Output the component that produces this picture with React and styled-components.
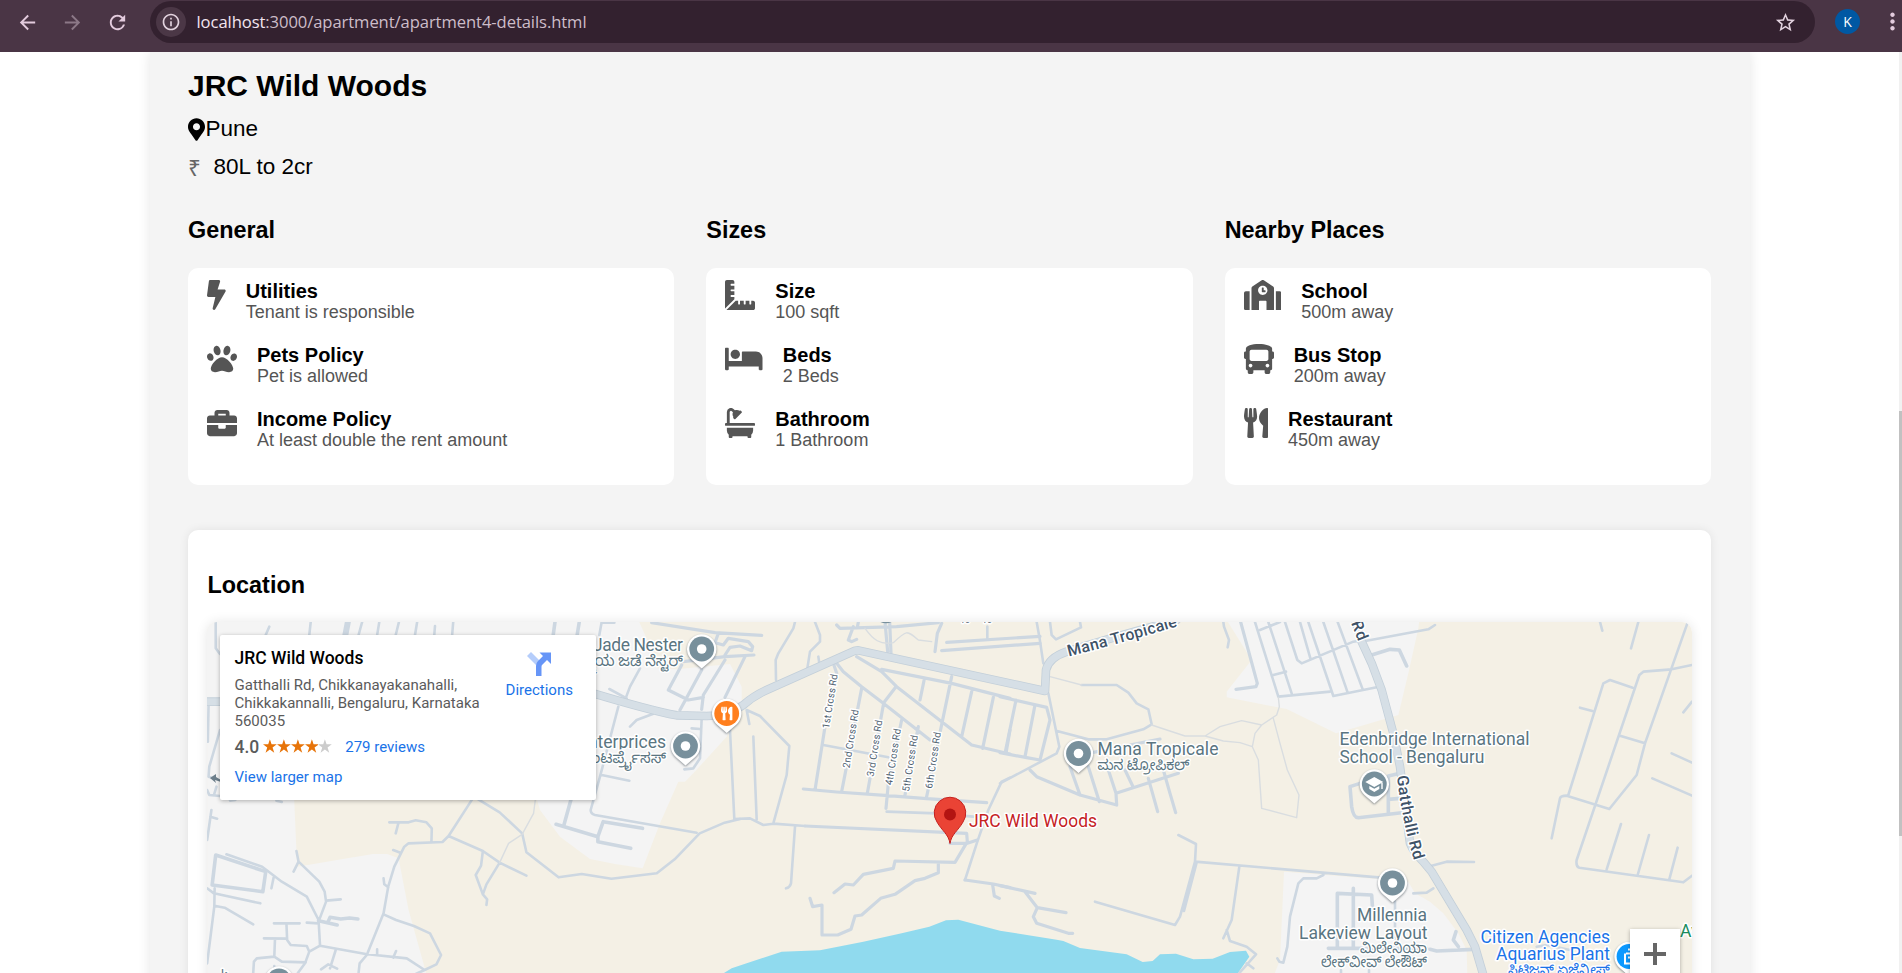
import React from "react";
import styled, { createGlobalStyle } from "styled-components";
import {
  FaBolt, FaPaw, FaBriefcase, FaRulerCombined, FaBed, FaBath,
  FaSchool, FaBus, FaUtensils, FaMapMarkerAlt,
} from "react-icons/fa";
import { MdArrowBack, MdArrowForward, MdRefresh, MdStarBorder, MdInfoOutline, MdMoreVert } from "react-icons/md";

const GlobalStyle = createGlobalStyle`
  * { box-sizing: border-box; }
  html, body { margin: 0; padding: 0; background: #fff; overflow: hidden; }
  body { font-family: "Liberation Sans", Arial, sans-serif; color: #000; }
  h2, h3, p { margin: 0; }
  svg { display: block; flex: none; }
`;

const Window = styled.div`
  height: 973px;
  display: flex;
  flex-direction: column;
  overflow: hidden;
`;

/* Browser bar */
const BrowserBar = styled.header`
  flex: none;
  height: 52px;
  background: #4a3545;
  display: flex;
  align-items: flex-start;
  padding-top: 1px;
  overflow: hidden;
`;
const NavButton = styled.span`
  width: 45px;
  height: 42px;
  display: flex;
  align-items: center;
  justify-content: center;
  color: ${(p) => (p.$dim ? "#8c7887" : "#e3cbdd")};
`;
const NavGroup = styled.div`
  flex: none;
  display: flex;
  width: 150px;
  padding-left: 5px;
`;
const AddressField = styled.div`
  flex: none;
  width: 1665px;
  height: 42px;
  border-radius: 21px;
  background: #33212f;
  display: flex;
  align-items: center;
  padding: 0 18px 0 6px;
  color: #e3d3df;
`;
const SiteInfo = styled.span`
  width: 30px;
  height: 30px;
  border-radius: 50%;
  background: #4b3746;
  display: flex;
  align-items: center;
  justify-content: center;
`;
const Url = styled.span`
  flex: 1;
  margin-left: 10.5px;
  font: 16.6px/24px "Open Sans", "Noto Sans", sans-serif;
  letter-spacing: -0.08px;
  color: #cdbdc9;
  b { font-weight: 400; color: #f3e6f0; }
`;
const Profile = styled.span`
  flex: none;
  width: 25px;
  height: 25px;
  margin: 8px 0 0 20px;
  border-radius: 50%;
  background: #0058a3;
  color: #fff;
  font: 14px/25px "Open Sans", sans-serif;
  text-align: center;
`;
const Menu = styled.span`
  flex: none;
  margin: 7px 0 0 18.5px;
  color: #e3cbdd;
`;

/* Page */
const Viewport = styled.div`
  flex: 1;
  display: flex;
  min-height: 0;
`;
const Scroller = styled.main`
  flex: 1;
  display: flex;
  justify-content: center;
  align-items: flex-start;
  overflow: hidden;
`;
const Scrollbar = styled.div`
  width: 3px;
  background: #f1f1f1;
  padding-top: 359px;
`;
const Thumb = styled.div`
  height: 425px;
  background: #c1c1c1;
`;
const Container = styled.article`
  width: 1600px;
  height: 1100px;
  flex: none;
  padding: 16px 38.5px 0;
  background: #f4f4f4;
  box-shadow: 0 0 12px rgba(0, 0, 0, 0.1);
`;
const Title = styled.h2`
  font-size: 30px;
  line-height: 36px;
`;
const Fact = styled.p`
  display: flex;
  align-items: center;
  height: 28px;
  margin-top: ${(p) => p.$top}px;
  font-size: 22.5px;
`;
const Marker = styled(FaMapMarkerAlt)`
  width: 17px;
  height: 23px;
  margin-right: 0.5px;
`;
const Rupee = styled.span`
  width: 25.5px;
  color: #666;
`;
const Columns = styled.section`
  display: grid;
  grid-template-columns: repeat(3, 1fr);
  gap: 32px;
  margin-top: 36px;
`;
const Heading = styled.h3`
  font-size: 23.4px;
  line-height: 27px;
`;
const Card = styled.div`
  margin-top: 24px;
  height: 217px;
  border-radius: 10px;
  background: #fff;
  padding: 11.5px 19px;
  display: flex;
  flex-direction: column;
  gap: 21px;
`;
const Item = styled.div`
  display: flex;
  gap: 20px;
  height: 43px;
  color: #555;
`;
const ItemIcon = styled.span`
  width: ${(p) => p.$width}px;
  svg { width: 100%; height: 30px; }
`;
const ItemText = styled.div`
  font-size: 18px;
  line-height: 21px;
  strong {
    display: block;
    color: #000;
    font-size: 20px;
    line-height: 22px;
  }
`;
const LocationCard = styled.section`
  margin-top: 45px;
  height: 560px;
  border-radius: 10px;
  background: #fff;
  box-shadow: 0 0 10px rgba(0, 0, 0, 0.08);
  padding: 42px 19px 0;
`;
const LocationHeading = styled(Heading)`
  padding-left: 0.5px;
`;
const MapShadow = styled.div`
  margin-top: 23px;
  border-radius: 10px;
  box-shadow: 0 0 12px rgba(0, 0, 0, 0.1);
`;
const MapFrame = styled.div`
  position: relative;
  height: 500px;
  border-radius: 10px;
  overflow: hidden;
  background: #f4f0e5;
`;
const PlaceCard = styled.div`
  position: absolute;
  left: 13px;
  top: 13px;
  width: 376px;
  height: 165px;
  border-radius: 2px;
  background: #fff;
  box-shadow: 0 1px 4px rgba(0, 0, 0, 0.3);
  display: flex;
  padding: 13px 15px 13px 14.5px;
  font: 15px/18px Roboto, sans-serif;
  color: #5b5b5b;
`;
const PlaceInfo = styled.div`
  width: 262px;
`;
const PlaceName = styled.div`
  font-size: 17.5px;
  line-height: 20px;
  font-weight: 500;
  color: #000;
  margin-bottom: 8px;
`;
const Rating = styled.div`
  display: flex;
  align-items: center;
  margin-top: 6px;
  height: 21px;
  b { font-size: 17.5px; font-weight: 500; margin-right: 4px; }
`;
const Link = styled.span`
  color: #1a73e8;
  margin-left: ${(p) => p.$left || 0}px;
`;
const LinkRow = styled.div`
  margin-top: 11px;
`;
const Directions = styled.div`
  flex: 1;
  padding-top: 4px;
  display: flex;
  flex-direction: column;
  align-items: center;
  gap: 5px;
  margin-left: 1px;
`;
const ZoomIn = styled.div`
  position: absolute;
  left: 1423px;
  top: 307px;
  width: 50px;
  height: 60px;
  background: #fff;
  box-shadow: 0 1px 4px rgba(0, 0, 0, 0.3);
  padding: 14px;
`;
const Roads = styled.g`
  fill: none;
  stroke: ${(p) => p.$tone || "#cdd7e1"};
  stroke-linecap: round;
  stroke-linejoin: round;
  stroke-width: ${(p) => p.$w || 2.6}px;
  path { vector-effect: non-scaling-stroke; }
`;
const Label = styled.text`
  font-family: Roboto, "Noto Sans Kannada", "Noto Sans", sans-serif;
  font-size: ${(p) => p.$size || 17.5}px;
  font-weight: ${(p) => p.$weight || 400};
  fill: ${(p) => p.$tone || "#5a7581"};
  paint-order: stroke;
  stroke: #fff;
  stroke-width: 3px;
  stroke-linejoin: round;
`;
const PinShape = styled.g`
  filter: drop-shadow(0 1px 1.2px rgba(60, 70, 80, 0.6));
`;

const WEST = "translate(180 520) scale(.357143 .333333)";
const MID = "translate(560 610) scale(.333333)";
const EAST = "translate(1000 610) scale(.333333)";
const FAR_EAST = "translate(1300 610) scale(.333333)";

const roads = [
  { at: WEST, w: 2.6, d: "M100 306V385L112 402M240 345L250 320M362 345L366 306M500 345L510 306M552 345L558 306M604 345L613 306M658 345L664 306M712 345L714 318M762 345L765 306M80 555L78 665M112 630L82 740L80 770L95 775M76 810L82 825L112 828M95 825L102 800M88 870L76 960M85 890L104 896M140 842L155 840M270 842L285 846M130 1003L230 1040L285 1085L355 1130L388 1200L392 1275M263 1068L256 1105M76 1105L95 1120L225 1150M97 1105L96 1160L76 1330M96 1157L125 1163L205 1213M326 993L332 1025L318 1055M332 1025L390 1085L405 1115L409 1145L388 1205M409 1142L450 1138M355 1208L388 1210M263 1210H335M298 1210L300 1260L310 1275L355 1278L362 1295M235 1255L300 1256M266 1256L264 1310M205 1359L207 1325L215 1315L264 1310L285 1325L352 1327M392 1277L362 1295L350 1330L330 1359M392 1277L520 1302L635 1315L685 1350M436 1290L420 1345M395 1348L415 1333L440 1346M264 1338V1353M552 1288V1303M605 1293L597 1313M660 1362L685 1350L718 1333L731 1305L700 1240L655 1218L605 1200L570 1183M500 1359L503 1330L523 1305L570 1180L583 1100L600 1040L628 980L640 970L735 966L752 948L818 838M597 990L617 998M570 1075L572 1093L583 1102M704 966L705 925L690 907L660 901L640 907H586M612 907L604 940M752 948L848 993L895 1028L970 1067M848 993L843 1037L828 1065L848 1123L860 1138L858 1155M848 1123L858 1093L895 1028M835 838L895 877L958 940L970 997L1060 1072L1125 1062L1208 1076L1335 1060L1385 1018L1455 940L1525 908L1568 897" },
  { at: WEST, w: 3.6, d: "M100 1005L240 1055L232 1115L90 1095ZM1095 838L1075 915M1053 913L1170 950L1185 905L1295 925M1170 950V965L1262 985M388 1202L440 1215M415 1205L420 1192L450 1197L475 1194L498 1197M1050 306L1045 345M1118 306L1112 345" },
  { at: WEST, w: 6, d: "M470 306L463 345" },
  { at: WEST, w: 1.4, tone: "#d9dde0", d: "M895 1028L920 970L958 943L990 880L995 838" },
  { at: MID, w: 2.6, d: "M125 36L118 75M125 38H163M240 175L210 230L198 262M148 237L200 265M278 312L230 330L210 350M175 290L120 500L92 600Q92 611 105 615L410 668M125 495L208 512M425 325L420 445L400 475L373 478M395 355L420 357M510 360L523 628M523 627L570 625L610 645L640 641L735 648M580 380L590 628M560 300L600 318L688 408L680 495L640 640M560 300L568 342M648 210L647 150L655 130L700 55L705 36M742 175L750 125L780 95V75L765 36M778 160L775 140M705 650L693 820Q690 832 678 835M980 605L1130 610L1240 620M1350 503L1325 515L1285 600L1252 695L1215 810M1282 50V85M790 405L985 442" },
  { at: MID, w: 3.2, d: "M275 38L465 68L605 76M365 165L325 240L385 270L430 262M425 180L360 300M495 150L430 255L425 298M555 140L495 262M370 155L495 140L582 135M475 70L465 98L490 105L505 85L565 95L578 110L575 122L540 108L510 112L495 135M735 648L1220 670L1222 695L1185 757L1005 753L1000 775L910 793L880 825L855 822L822 848M1170 700H1222L1252 690M1135 757V788L1095 805L1065 812L1005 853L962 865L905 915L885 918L873 958L833 975H786V885L758 890L750 865M730 537L830 546L975 556L1100 566L1280 578M1215 810L1300 822L1350 833M1298 825L1303 858L1318 865M795 350L765 540M820 160L830 190M905 235L845 545M970 285L922 550M1025 330L985 520L978 595M1075 350L1035 555M1175 200L1100 560M830 160L850 185L905 230L970 280L1110 390M890 140L965 185L1010 230L1235 405L1350 432M965 178L1175 220L1350 265M1008 230L970 280M1092 212L1080 270M1235 245L1205 380M1300 262L1268 415M1350 360L1338 430M830 45L840 55L1010 50L1135 38M880 50L865 90L875 95L890 88M895 36L892 52M1145 40L1132 70L1125 125M1160 97L1440 79M1145 122L1440 100M975 36L983 125M989 36L993 130" },
  { at: MID, w: 1.4, tone: "#d9dde0", d: "M915 55C940 90 960 105 1000 98C1040 60 1040 60 1075 90L1115 95" },
  { at: EAST, w: 2.6, d: "M145 250L178 410L170 430L0 520M150 36L155 75L168 88L243 52L240 36M245 225H350L385 248L410 280L445 298L455 343L430 358L320 388H265L168 362M535 675L588 702L585 755L540 920L525 945L285 875M590 757L552 903M585 755L1170 805M718 770L695 930L670 985M680 960L690 993L740 1010L768 1033L718 1089M740 1060L760 1075M670 36L672 50L687 90L683 112M765 36L835 260L990 245M805 36L875 250M780 60L840 36M820 195L858 185M855 36L892 150L905 160L1060 95L1090 90M900 36L932 148M925 36L1000 258L1130 232M970 36L1042 245M1013 36L1087 235M970 795L950 805H910L895 820L870 920L862 1010L850 1058L838 1055L832 1045M110 36L118 80L130 160" },
  { at: EAST, w: 3.2, d: "M0 260L140 292L150 330L120 450L80 443L0 428M48 270L15 430M105 285L75 440M90 480L110 500L240 555L350 585L348 550L535 490M210 470L240 555M265 470L298 575M325 480L348 550M375 480L398 528M445 505L473 605M490 480L510 550L527 608M280 427L480 387M0 827L105 850M75 845L112 893L198 908M112 893L100 920L110 940L205 970H218M722 36L772 220L768 230L708 238" },
  { at: EAST, w: 1.4, tone: "#d9dde0", d: "M150 200L245 225M455 345L555 378H615L660 350L725 332L785 345L830 315L838 290L835 262M615 378L670 393L720 398L757 410L765 370L785 345M757 410L775 450L785 595L890 623L897 555L862 480L840 400L820 325" },
  { at: FAR_EAST, w: 2.6, d: "M200 92L385 58L405 45M395 767L440 755L522 756M900 36L907 62M1015 36L993 115M1162 40L1035 400L1010 495L928 597L800 557Q782 557 780 565L755 685M805 555L910 220L930 210L998 233M1176 165L1115 178L1030 185L1018 195L830 750Q827 770 838 773L1150 817L1176 797M840 293L877 303M960 377L1035 400M1150 307L1176 275M1115 430L1176 458M1057 505L1176 557M963 642L920 778M1047 675L1013 795M1133 713L1108 808M400 835L380 848L340 850M285 875V1020M710 1010L740 1005L810 1020M123 1080V1089M207 1080V1089" },
  { at: FAR_EAST, w: 3.6, d: "M215 135L270 118L298 120L320 168M300 490L265 498V610M180 520L150 530L155 590Q160 623 175 623L305 608M265 568L300 565M112 1015V850L215 855L218 900M160 835V1015M85 1015H380M390 1018L410 1023L520 1018M468 965L460 990L475 1010" },
];

const highways = [
  { at: WEST, d: "M60 545H120" },
  { at: MID, d: "M90 247C200 280 280 303 350 316L440 318L500 315L550 285Q580 258 620 240L885 122L895 121L1455 243L1458 180C1465 150 1490 135 1520 125C1600 100 1700 70 1850 30" },
  { at: FAR_EAST, d: "M165 30L185 95L215 160L245 240L280 370L300 470L330 700Q340 725 370 755L395 785L500 960L525 1010L550 1095" },
];

function Pin({ x, y, tone = "#78909c", children }) {
  return (
    <g transform={`translate(${x} ${y})`}>
      <PinShape>
        <path d="M0 19.500L-9.500 11.200A14.700 14.700 0 1 1 9.500 11.200Z" fill="#fff" />
      </PinShape>
      <circle r="12.400" fill={tone} />
      {children || <circle r="4.800" fill="#fff" />}
    </g>
  );
}

function Area({ at, d, fill = "#f4f4f4" }) {
  return <path transform={at} d={d} fill={fill} />;
}

function Kannada({ x, y, width, tone, children }) {
  return (
    <Label $size={15} $tone={tone} x={x} y={y} textLength={width} lengthAdjust="spacingAndGlyphs">{children}</Label>
  );
}

const crossRoads = [
  ["1st Cross Rd", 829, 729, 55], ["2nd Cross Rd", 849.5, 768.5, 59], ["3rd Cross Rd", 873.5, 777, 57],
  ["4th Cross Rd", 892, 785.5, 57], ["5th Cross Rd", 909, 792, 57], ["6th Cross Rd", 932, 789, 57],
];

function MapDrawing() {
  return (
    <svg width="1485" height="351" viewBox="207 622 1485 351">
      <defs>
        <path id="mana-road" d="M1069 656.5Q1125 642 1192 622" />
        <path id="gatthalli" d="M1397 776Q1402 822 1415 863" />
      </defs>
      <Area at={MID} d="M-1060 30H235L262 90L290 175L350 178L510 162L545 230V275L500 380L400 490L375 515H355L300 640L248 775L165 762L90 747L0 680L-60 600L-90 500L-1060 400Z" />
      <Area at={WEST} d="M76 500H320V845L328 1040L440 1020L540 1002L580 1002L612 1015L640 1170L690 1362H76Z" />
      <Area at={FAR_EAST} d="M-220 30L-145 150L-220 245V262L-40 297L108 370L295 315L325 190L355 55L358 30Z" />
      <Area at={FAR_EAST} d="M-48 785L240 808L325 815L345 850L390 875L430 910L475 970L500 1020L502 1095H-78L-60 1050Z" />
      <Area at={MID} fill="#90daee" d="M492 1089L515 1075L560 1060L665 1025L780 1021L910 995L1025 970L1108 950L1158 931L1195 929L1320 962L1490 989L1510 993L1560 1014L1700 1033L1748 1056L1778 1053L1800 1033L1848 1031L1900 1048L1958 1046L2010 1026L2058 1022L2068 1040L2030 1095Z" />
      {roads.map((r, i) => (
        <Roads key={i} $w={r.w} $tone={r.tone}><path transform={r.at} d={r.d} /></Roads>
      ))}
      <Roads $w={8.6} $tone="#c3cfd9">{highways.map((r, i) => <path key={i} transform={r.at} d={r.d} />)}</Roads>
      <Roads $w={7} $tone="#d6dfe6">{highways.map((r, i) => <path key={i} transform={r.at} d={r.d} />)}</Roads>
      <path d="M210 778L216 774V777L221 780V782L215 780L216 783Z" fill="#6d7f8b" />

      {crossRoads.map(([name, x, y, w]) => (
        <Label key={name} $size={10} $tone="#4f6170" textLength={w} transform={`translate(${x} ${y}) rotate(-81)`}>{name}</Label>
      ))}
      <Label $size={16} $weight={500} $tone="#3f5368"><textPath href="#mana-road" textLength="113">Mana Tropicale</textPath></Label>
      <Label $size={16} $weight={500} $tone="#3f5368"><textPath href="#gatthalli" textLength="86">Gatthalli Rd</textPath></Label>
      <Label $size={16} $weight={500} $tone="#3f5368" transform="translate(1351 623) rotate(68)" textLength="20">Rd</Label>
      <Label $size={9} $tone="#4f6170" x="960" y="623">10</Label>
      <Label $size={9} $tone="#4f6170" x="982" y="623">10</Label>

      <Label x="593" y="651" textLength="90">Jade Nester</Label>
      <Label $size={15} x="683" y="666" textAnchor="end">ಲಕ್ಷ್ಮಿಯ ಜಡೆ ನೆಸ್ಟರ್</Label>
      <Label x="666" y="748" textAnchor="end">Enterprices</Label>
      <Label $size={15} x="666" y="763" textAnchor="end">ಎಂಟರ್ಪ್ರೈಸಸ್</Label>
      <Label x="1097.5" y="755" textLength="121">Mana Tropicale</Label>
      <Kannada x={1097.5} y={769.5} width={92}>ಮನ ಟ್ರೋಪಿಕಲ್</Kannada>
      <Label x="1339.5" y="745" textLength="190">Edenbridge International</Label>
      <Label x="1339.5" y="762.5" textLength="145">School - Bengaluru</Label>
      <Label x="1357" y="921" textLength="70">Millennia</Label>
      <Label x="1299" y="939" textLength="128.5">Lakeview Layout</Label>
      <Kannada x={1360} y={953} width={67}>ಮಿಲೇನಿಯಾ</Kannada>
      <Kannada x={1321} y={966.5} width={106}>ಲೇಕ್‌ವೀವ್ ಲೇಔಟ್</Kannada>
      <Label $tone="#1a73e8" x="1480.5" y="942.5" textLength="129.5">Citizen Agencies</Label>
      <Label $tone="#1a73e8" x="1496" y="960" textLength="114">Aquarius Plant</Label>
      <Kannada tone="#1a73e8" x={1508} y={974.5} width={102}>ಸಿಟಿಜನ್ ಏಜೆನ್ಸೀಸ್</Kannada>
      <Label $tone="#188c5c" x="1680" y="936.5">Av</Label>
      <Label $tone="#c5221f" x="969" y="827" textLength="128">JRC Wild Woods</Label>

      <circle cx="886" cy="611" r="12.3" fill="#78909c" />
      <Pin x={701.7} y={649} />
      <Pin x={685.5} y={746} />
      <Pin x={1078.5} y={753.5} />
      <Pin x={1392.5} y={883} />
      <Pin x={279} y={981} />
      <Label $size={13} x="221" y="979">k</Label>
      <Pin x={726.7} y={713.5} tone="#ff7f1e">
        <g transform="translate(-7 -7)"><FaUtensils size={14} color="#fff" /></g>
      </Pin>
      <Pin x={1374.3} y={784}>
        <path d="M0 -7L9 -2L0 3L-9 -2ZM-5 2V5L0 8L5 5V2L0 4.8ZM7 -1H8.4V5H7Z" fill="#fff" />
      </Pin>
      <Pin x={1629} y={956.5} tone="#0d99ff">
        <path d="M-3 -3H5M-1 -7H3V-3M-4 -3V7H5M-1 1H5" fill="none" stroke="#fff" strokeWidth="2" />
      </Pin>
      <path d="M950 843.5C948.5 834 942 831 937 822A15.8 15.8 0 1 1 963 822C958 831 951.5 834 950 843.5Z" fill="#ea4335" stroke="#c5221f" />
      <circle cx="950" cy="814.5" r="6" fill="#b31412" />
    </svg>
  );
}

function Star({ on }) {
  return (
    <svg width="13.8" height="15" viewBox="0 0 14 15">
      <path d="M7 .2L8.700 5.300H14L9.700 8.500L11.400 13.800L7 10.600L2.600 13.800L4.300 8.500L0 5.300H5.300Z" fill={on ? "#e77409" : "#ccc"} />
    </svg>
  );
}

const groups = [
  { title: "General", items: [
    [FaBolt, 18.75, "Utilities", "Tenant is responsible"],
    [FaPaw, 30, "Pets Policy", "Pet is allowed"],
    [FaBriefcase, 30, "Income Policy", "At least double the rent amount"],
  ] },
  { title: "Sizes", items: [
    [FaRulerCombined, 30, "Size", "100 sqft"],
    [FaBed, 37.5, "Beds", "2 Beds"],
    [FaBath, 30, "Bathroom", "1 Bathroom"],
  ] },
  { title: "Nearby Places", items: [
    [FaSchool, 37.5, "School", "500m away"],
    [FaBus, 30, "Bus Stop", "200m away"],
    [FaUtensils, 24.4, "Restaurant", "450m away"],
  ] },
];

export default function App() {
  return (
    <Window>
      <GlobalStyle />
      <BrowserBar>
        <NavGroup>
          <NavButton><MdArrowBack size={23} /></NavButton>
          <NavButton $dim><MdArrowForward size={23} /></NavButton>
          <NavButton><MdRefresh size={23} /></NavButton>
        </NavGroup>
        <AddressField>
          <SiteInfo><MdInfoOutline size={20} /></SiteInfo>
          <Url><b>localhost</b>:3000/apartment/apartment4-details.html</Url>
          <MdStarBorder size={23} />
        </AddressField>
        <Profile>K</Profile>
        <Menu><MdMoreVert size={27} /></Menu>
      </BrowserBar>
      <Viewport>
        <Scroller>
          <Container>
            <Title>JRC Wild Woods</Title>
            <Fact $top={11}><Marker />Pune</Fact>
            <Fact $top={10}><Rupee>₹</Rupee>80L to 2cr</Fact>
            <Columns>
              {groups.map((g) => (
                <div key={g.title}>
                  <Heading>{g.title}</Heading>
                  <Card>
                    {g.items.map(([Icon, w, name, detail]) => (
                      <Item key={name}>
                        <ItemIcon $width={w}><Icon /></ItemIcon>
                        <ItemText><strong>{name}</strong>{detail}</ItemText>
                      </Item>
                    ))}
                  </Card>
                </div>
              ))}
            </Columns>
            <LocationCard>
              <LocationHeading>Location</LocationHeading>
              <MapShadow>
                <MapFrame>
                  <MapDrawing />
                  <PlaceCard>
                    <PlaceInfo>
                      <PlaceName>JRC Wild Woods</PlaceName>
                      Gatthalli Rd, Chikkanayakanahalli,<br />
                      Chikkakannalli, Bengaluru, Karnataka<br />
                      560035
                      <Rating>
                        <b>4.0</b>
                        {[1, 1, 1, 1, 0].map((on, i) => <Star key={i} on={on} />)}
                        <Link $left={13}>279 reviews</Link>
                      </Rating>
                      <LinkRow><Link>View larger map</Link></LinkRow>
                    </PlaceInfo>
                    <Directions>
                      <svg width="24" height="24" viewBox="0 0 24 24">
                        <path d="M0 4L4 0L14 10L10 14Z" fill="#b5cdfb" />
                        <path d="M9 24V14Q9 11 11 9L16 4L12.500 .5H24V12L20 8L15 13Q14.500 13.500 14.500 15V24Z" fill="#6695f7" />
                      </svg>
                      <Link>Directions</Link>
                    </Directions>
                  </PlaceCard>
                  <ZoomIn>
                    <svg width="22" height="22" viewBox="0 0 22 22"><path d="M9 0H13V9H22V13H13V22H9V13H0V9H9Z" fill="#666" /></svg>
                  </ZoomIn>
                </MapFrame>
              </MapShadow>
            </LocationCard>
          </Container>
        </Scroller>
        <Scrollbar><Thumb /></Scrollbar>
      </Viewport>
    </Window>
  );
}
